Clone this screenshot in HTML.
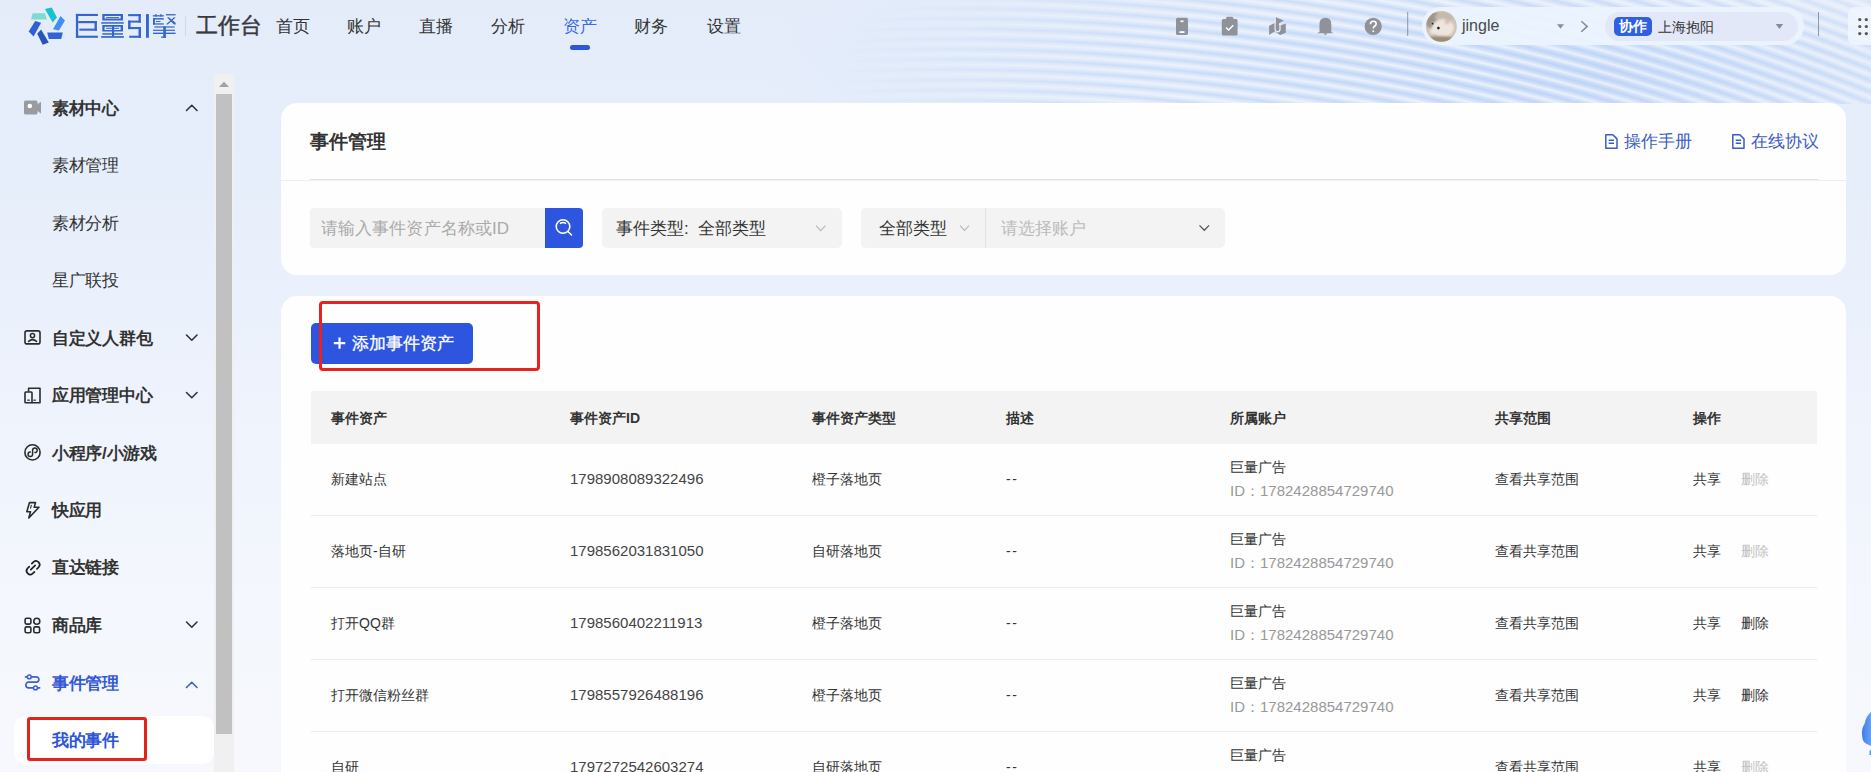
<!DOCTYPE html>
<html><head><meta charset="utf-8">
<style>
*{box-sizing:border-box;margin:0;padding:0}
html,body{width:1871px;height:772px;overflow:hidden}
body{font-family:"Liberation Sans",sans-serif;position:relative;color:#333;
background:linear-gradient(180deg,#e4ecfa 0px,#e6eefb 150px,#edf2fc 380px,#f4f7fd 600px,#f6f8fd 772px);}
.abs{position:absolute}
.nav{position:absolute;top:15px;font-size:17px;color:#333;line-height:24px;white-space:nowrap}
.si{position:absolute;left:52px;font-size:17px;line-height:22px;color:#333;white-space:nowrap;letter-spacing:-0.3px}
.sb{font-weight:bold}
.ic{position:absolute;left:18px;width:30px;height:30px}
.chev{position:absolute;left:182px;width:20px;height:14px}
.card{position:absolute;background:#fefefe;border-radius:16px}
.th{position:absolute;top:409px;font-size:14px;font-weight:bold;color:#333;line-height:18px;white-space:nowrap}
.td{position:absolute;font-size:14px;color:#333;line-height:18px;white-space:nowrap}
.num{font-size:15px;color:#444}
.gray{color:#999 !important}
.line{position:absolute;height:1px;background:#ebebeb}
</style></head><body>
<!-- header bg streaks -->
<div class="abs" style="left:0;top:0;width:1871px;height:104px;overflow:hidden">
  <div class="abs" style="left:0;top:0;width:1871px;height:104px;background:radial-gradient(ellipse 420px 90px at 1600px 75px,rgba(196,216,248,0.75),rgba(205,222,249,0) 100%),radial-gradient(ellipse 500px 120px at 1250px 60px,rgba(210,226,250,0.5),rgba(210,226,250,0) 100%)"></div>
  <div class="abs" style="left:0;top:0;width:1871px;height:104px;background:repeating-radial-gradient(ellipse 2000px 1700px at 950px 1750px,rgba(255,255,255,0) 0px,rgba(255,255,255,0.6) 3px,rgba(255,255,255,0) 6px,rgba(165,196,243,0.45) 9px,rgba(255,255,255,0) 12px);-webkit-mask-image:radial-gradient(ellipse 650px 170px at 1480px 70px,#000 0%,rgba(0,0,0,0.7) 55%,transparent 100%)"></div>
</div>

<!-- logo -->
<svg class="abs" style="left:0;top:0" width="80" height="50" viewBox="0 0 80 50">
<polygon points="32.6,13.3 45,13.3 46.9,19.4 31,19.4" fill="#7edbd2"/>
<polygon points="44.9,9.1 51.8,7.5 56.9,17.5 52.7,22.4" fill="#18c1cb"/>
<polygon points="60.5,15.9 65,20.4 58.9,30.5 53,29.2" fill="#3f8ff5"/>
<polygon points="47.2,32.4 62.8,32.4 61.2,38.9 48.8,38.9" fill="#2f63d6"/>
<polygon points="37.2,33.7 41.1,29.5 48.8,42.4 42.7,44.7" fill="#2b54b9"/>
<polygon points="28.7,31.4 35.2,21.1 41.1,22.7 33.6,36.6" fill="#3060d5"/>
</svg>
<svg class="abs" style="left:70px;top:8px" width="112" height="36" viewBox="70 8 112 36">
 <g fill="#3566cb">
  <!-- ju -->
  <rect x="75.9" y="13.9" width="2.3" height="23.9"/>
  <rect x="75.9" y="13.9" width="22" height="2.1"/>
  <rect x="75.9" y="35.7" width="22" height="2.1"/>
  <rect x="78.2" y="21" width="18.7" height="2.2"/>
  <rect x="94.5" y="21" width="2.4" height="9.7"/>
  <rect x="79.3" y="28.6" width="17.6" height="2.1"/>
  <!-- liang -->
  <path d="M102.3,13.9 H123 V20.6 H102.3 Z M104.6,16 V18.6 H120.6 V16 Z" fill-rule="evenodd"/>
  <rect x="106" y="17" width="13" height="0.9"/>
  <rect x="101.2" y="22.2" width="22.6" height="1.5"/>
  <path d="M102.3,25.1 H123 V31.5 H102.3 Z M104.6,26.7 V29.9 H120.6 V26.7 Z" fill-rule="evenodd"/>
  <rect x="106" y="27.8" width="13" height="1"/>
  <rect x="112" y="25.1" width="2.1" height="11.6"/>
  <rect x="102.3" y="33.2" width="20.7" height="1.5"/>
  <rect x="101.2" y="36.1" width="22.6" height="1.7"/>
  <!-- yin -->
  <rect x="128.1" y="14.1" width="12.7" height="2.1"/>
  <rect x="138.5" y="14.1" width="2.3" height="8.5"/>
  <rect x="128.1" y="20.6" width="12.7" height="2"/>
  <rect x="128.1" y="20.6" width="2.5" height="8.5"/>
  <rect x="128.1" y="27" width="12.7" height="2.1"/>
  <rect x="138.5" y="27" width="2.5" height="10.8"/>
  <rect x="129.2" y="35.7" width="11.8" height="2.1"/>
  <rect x="146" y="14.1" width="2.9" height="23.7"/>
  <!-- qing -->
  <rect x="152.8" y="15.2" width="11" height="1.3"/>
  <rect x="155.3" y="14.1" width="1.3" height="2.5"/>
  <rect x="160.3" y="14.1" width="1.3" height="2.5"/>
  <rect x="153" y="18.1" width="10.8" height="1.5"/>
  <rect x="153" y="18.1" width="1.9" height="6.4"/>
  <rect x="155.9" y="21" width="4.6" height="1"/>
  <rect x="153" y="23.3" width="10.8" height="1.3"/>
  <rect x="165.9" y="14.1" width="9.7" height="1.3"/>
  <path d="M167,17.6 L168.8,17.2 L175.6,22.7 L175.6,24.5 L174,24.5 Z"/>
  <path d="M174,17.2 L175.6,17.6 L167.8,24.5 L166,24.3 Z"/>
  <rect x="154.3" y="26.4" width="20.3" height="1.2"/>
  <rect x="153" y="29.7" width="22" height="1.2"/>
  <rect x="153" y="32.6" width="22.6" height="1.4"/>
  <rect x="163.2" y="26.4" width="2.7" height="11.4"/>
  <rect x="161.1" y="36.5" width="4.8" height="1.3"/>
 </g>
</svg>
<div class="abs" style="left:185px;top:16px;width:1px;height:20px;background:#d3d9e2"></div>
<div class="abs" style="left:196px;top:11px;font-size:22px;line-height:30px;color:#363940;-webkit-text-stroke:0.45px #363940">工作台</div>

<div class="nav" style="left:276px">首页</div>
<div class="nav" style="left:347px">账户</div>
<div class="nav" style="left:419px">直播</div>
<div class="nav" style="left:491px">分析</div>
<div class="nav" style="left:563px;color:#3a6ae0">资产</div>
<div class="abs" style="left:570px;top:45px;width:20px;height:5px;border-radius:3px;background:#2d55e0"></div>
<div class="nav" style="left:634px">财务</div>
<div class="nav" style="left:707px">设置</div>

<!-- header icons -->
<svg class="abs" style="left:1160px;top:5px" width="260" height="45" viewBox="1160 5 260 45">
 <g fill="#909299">
  <rect x="1176" y="17.8" width="12" height="17.2" rx="1.6"/>
  <rect x="1221.8" y="19" width="15.8" height="16.5" rx="1.6"/>
  <rect x="1226" y="16.8" width="7.4" height="3.4" rx="1.5"/>
  <path d="M1269.1,25.8 L1274.7,22.9 L1280.1,25.5 L1285.8,23.4 L1285.8,32.7 L1280.1,34.9 L1274.7,31.6 L1269.1,34.9 Z"/>
  <path d="M1275.1,19 L1275.1,29.3 A2.45,2.45 0 0 0 1280,29.3 L1280,22" stroke="#e6eefb" stroke-width="1.3" fill="none"/>
  <path d="M1275.9,17.2 L1283.8,20.6 L1278.9,23.6 L1278.9,29.3 A1.5,1.5 0 0 1 1275.9,29.3 Z"/>
  <path d="M1325.4,17.8 C1320.5,17.8 1319.5,21.5 1319.5,24.5 L1319.5,32 L1317,33.3 L1333.7,33.3 L1331.3,32 L1331.3,24.5 C1331.3,21.5 1330.3,17.8 1325.4,17.8 Z"/>
  <path d="M1323.3,33.3 L1327.5,33.3 L1325.4,35.2 Z"/>
  <circle cx="1373.2" cy="26.4" r="8.6"/>
 </g>
 <g fill="#fff">
  <rect x="1180.5" y="20.5" width="3" height="1.6"/>
  <rect x="1179.5" y="31.2" width="5" height="1.8"/>
 </g>
 <path d="M1226,27.5 L1228.6,30 L1233.3,25.3" stroke="#fff" stroke-width="1.5" fill="none"/>
 <path d="M1370.4,24.2 Q1370.4,21.2 1373.3,21.2 Q1376.2,21.2 1376.2,23.8 Q1376.2,25.5 1374.3,26.5 Q1373.3,27 1373.3,28.6" stroke="#fff" stroke-width="1.6" fill="none"/>
 <circle cx="1373.3" cy="31.2" r="1" fill="#fff"/>
 <rect x="1407.2" y="12" width="1" height="24" fill="rgba(110,116,128,0.7)"/>
</svg>

<!-- user pill -->
<div class="abs" style="left:1422px;top:7px;width:382px;height:38px;border-radius:19px;background:rgba(236,244,254,0.92)"></div>
<svg class="abs" style="left:1426px;top:10.8px" width="31" height="31" viewBox="0 0 31 31">
 <defs><clipPath id="av"><circle cx="15.4" cy="15.4" r="15.4"/></clipPath>
 <filter id="bl" x="-50%" y="-50%" width="200%" height="200%"><feGaussianBlur stdDeviation="0.9"/></filter></defs>
 <g clip-path="url(#av)">
  <rect width="31" height="31" fill="#cfc3b6"/>
  <g filter="url(#bl)">
  <ellipse cx="7" cy="9" rx="8" ry="9" fill="#9f968b"/>
  <ellipse cx="18" cy="6" rx="9" ry="5" fill="#c4b9ae"/>
  <ellipse cx="17" cy="17" rx="11" ry="9" fill="#eee5dc"/>
  <ellipse cx="15" cy="30" rx="16" ry="5" fill="#9d8c74"/>
  <ellipse cx="21" cy="11" rx="2.5" ry="2.2" fill="#dcbcb8"/>
  <ellipse cx="7" cy="20" rx="3" ry="3" fill="#efe8e2"/>
  </g>
  <circle cx="12.4" cy="17.1" r="1.3" fill="#151515"/>
  <circle cx="6.6" cy="12.7" r="0.9" fill="#222"/>
 </g>
</svg>
<div class="abs" style="left:1462px;top:16px;font-size:16px;line-height:20px;color:#4a4a4a">jingle</div>
<svg class="abs" style="left:1550px;top:15px" width="50" height="22" viewBox="1550 15 50 22">
 <path d="M1557,24.2 L1564,24.2 L1560.5,28.8 Z" fill="#8a8d93"/>
 <path d="M1581.3,21.2 L1587.2,26.4 L1581.3,31.7" stroke="#858890" stroke-width="1.5" fill="none"/>
</svg>
<div class="abs" style="left:1605px;top:12px;width:193px;height:29px;border-radius:14.5px;background:#e3e8f8"></div>
<div class="abs" style="left:1614px;top:17px;width:38px;height:18.5px;border-radius:5px;background:#2f60e2"></div>
<div class="abs" style="left:1619px;top:17px;font-size:14px;line-height:19px;color:#fff;font-weight:bold">协作</div>
<div class="abs" style="left:1658px;top:17.5px;font-size:14px;line-height:19px;color:#333">上海抱阳</div>
<svg class="abs" style="left:1770px;top:20px" width="60" height="20" viewBox="1770 20 60 20">
 <path d="M1775.7,23.9 L1783.2,23.9 L1779.45,29 Z" fill="#8a8d93"/>
</svg>
<div class="abs" style="left:1818px;top:12px;width:1px;height:23.5px;background:rgba(110,116,128,0.7)"></div>
<div class="abs" style="left:1848px;top:7px;width:40px;height:38px;border-radius:7px;background:rgba(240,245,253,0.9)"></div>
<svg class="abs" style="left:1850px;top:14px" width="21" height="25" viewBox="1850 14 21 25">
 <g fill="#555">
 <circle cx="1859.8" cy="19.6" r="1.6"/><circle cx="1866.3" cy="19.6" r="1.6"/>
 <circle cx="1859.8" cy="26.5" r="1.6"/><circle cx="1866.3" cy="26.5" r="1.6"/>
 <circle cx="1859.8" cy="33.6" r="1.6"/><circle cx="1866.3" cy="33.6" r="1.6"/>
 </g>
</svg>
<!-- sidebar -->
<svg class="abs" style="left:0;top:90px" width="215" height="620" viewBox="0 90 215 620" fill="none" stroke-linecap="round" stroke-linejoin="round">
 <!-- camera -->
 <rect x="24" y="100.6" width="13.5" height="14" rx="1.6" fill="#9a9ba0"/>
 <path d="M37,104.5 L41,101.8 L41,113.4 L37,110.8 Z" fill="#9a9ba0"/>
 <circle cx="29.8" cy="106" r="2.3" fill="#fff"/>
 <!-- chevron up -->
 <path d="M186.5,110.5 L191.8,105.3 L197,110.5" stroke="#333" stroke-width="1.6"/>
 <!-- person box -->
 <rect x="25" y="330.9" width="15" height="13" rx="2" stroke="#2b2b2b" stroke-width="1.6"/>
 <circle cx="32.5" cy="335.6" r="2.1" stroke="#2b2b2b" stroke-width="1.5"/>
 <path d="M28.6,341.4 Q32.5,337.8 36.6,341.4" stroke="#2b2b2b" stroke-width="1.5"/>
 <path d="M186.5,335 L191.8,340.2 L197,335" stroke="#333" stroke-width="1.6"/>
 <!-- devices -->
 <path d="M28.6,391 L28.6,388.2 L40,388.2 L40,402.8 L32,402.8" stroke="#2b2b2b" stroke-width="1.6"/>
 <rect x="25" y="392" width="7" height="10.8" rx="0.8" stroke="#2b2b2b" stroke-width="1.6"/>
 <path d="M27.8,400.2 L29.3,400.2 M34,400.2 L35.3,400.2" stroke="#2b2b2b" stroke-width="1.3"/>
 <path d="M186.5,392.5 L191.8,397.7 L197,392.5" stroke="#333" stroke-width="1.6"/>
 <!-- mini program -->
 <circle cx="32.5" cy="452.4" r="7.6" stroke="#2b2b2b" stroke-width="1.6"/>
 <path d="M30.3,452 A2.3,2.3 0 1 0 32.6,454.3 L32.6,450.3 A2.3,2.3 0 1 1 34.9,452.6" stroke="#2b2b2b" stroke-width="1.5"/>
 <!-- lightning -->
 <path d="M29.5,502.6 L35.5,502.6 L34.2,507.2 L39,507.2 L28.8,518 L30.5,511.7 L26.8,511.7 Z" stroke="#2b2b2b" stroke-width="1.6"/>
 <path d="M31.3,505.4 L30.6,508.2" stroke="#2b2b2b" stroke-width="1.1"/>
 <!-- link -->
 <path d="M31.8,563.6 L33.6,561.8 A3.7,3.7 0 0 1 38.8,567 L37,568.8" stroke="#1f1f1f" stroke-width="1.7"/>
 <path d="M29.3,566.6 L27.4,568.5 A3.7,3.7 0 0 0 32.6,573.7 L34.4,571.9" stroke="#1f1f1f" stroke-width="1.7"/>
 <path d="M30.8,569.7 L35.2,565.4" stroke="#1f1f1f" stroke-width="1.7"/>
 <!-- grid -->
 <rect x="25.1" y="618.3" width="5.8" height="5.8" rx="1.5" stroke="#2b2b2b" stroke-width="1.6"/>
 <circle cx="36.8" cy="621.2" r="3" stroke="#2b2b2b" stroke-width="1.6"/>
 <rect x="25.1" y="626.9" width="5.8" height="5.8" rx="1.5" stroke="#2b2b2b" stroke-width="1.6"/>
 <rect x="33.8" y="626.9" width="5.8" height="5.8" rx="1.5" stroke="#2b2b2b" stroke-width="1.6"/>
 <path d="M186.5,622 L191.8,627.2 L197,622" stroke="#333" stroke-width="1.6"/>
 <!-- event -->
 <path d="M25.5,676.9 L36.3,676.9 A2.6,2.6 0 0 1 36.3,682.1 L28.7,682.1 A2.9,2.9 0 0 0 28.7,687.9 L39.7,687.9" stroke="#3a5fd0" stroke-width="1.6"/>
 <circle cx="29.3" cy="676.9" r="1.9" fill="#fff" stroke="#3a5fd0" stroke-width="1.5"/>
 <circle cx="35.5" cy="687.9" r="1.9" fill="#fff" stroke="#3a5fd0" stroke-width="1.5"/>
 <path d="M186.5,687.5 L191.8,682.3 L197,687.5" stroke="#3a5fd0" stroke-width="1.6"/>
</svg>
<div class="si sb" style="top:98px">素材中心</div>
<div class="si" style="top:155px">素材管理</div>
<div class="si" style="top:213px">素材分析</div>
<div class="si" style="top:270px">星广联投</div>
<div class="si sb" style="top:328px">自定义人群包</div>
<div class="si sb" style="top:385px">应用管理中心</div>
<div class="si sb" style="top:443px">小程序/小游戏</div>
<div class="si sb" style="top:500px">快应用</div>
<div class="si sb" style="top:557px">直达链接</div>
<div class="si sb" style="top:615px">商品库</div>
<div class="si sb" style="top:673px;color:#3459d6">事件管理</div>
<div class="abs" style="left:14px;top:716px;width:200px;height:48px;border-radius:12px;background:#fff"></div>
<div class="si sb" style="top:730px;color:#2d55d8">我的事件</div>
<div class="abs" style="left:26.5px;top:716.5px;width:120px;height:44.5px;border:3px solid #e5231d;border-radius:3px"></div>

<!-- scrollbar -->
<div class="abs" style="left:214px;top:74px;width:20px;height:698px;background:#f0f0f0"></div>
<svg class="abs" style="left:214px;top:74px" width="20" height="20" viewBox="214 74 20 20"><path d="M219,87 L229,87 L224,81.8 Z" fill="#a3a3a3"/></svg>
<div class="abs" style="left:216px;top:94px;width:16px;height:640px;background:#c1c1c1"></div>
<!-- card 1 -->
<div class="card" style="left:281px;top:103px;width:1565px;height:172px"></div>
<div class="abs" style="left:310px;top:129px;font-size:19px;font-weight:bold;line-height:25px;color:#333">事件管理</div>
<svg class="abs" style="left:1600px;top:130px" width="150" height="22" viewBox="1600 130 150 22" fill="none" stroke="#3b5cc4" stroke-width="1.5" stroke-linejoin="round">
 <path d="M1605.8,134.7 L1612.8,134.7 L1617,138.9 L1617,148.2 L1605.8,148.2 Z"/>
 <path d="M1608.7,140.3 L1614,140.3 M1608.7,143.2 L1614,143.2"/>
 <path d="M1732.8,134.7 L1739.8,134.7 L1744,138.9 L1744,148.2 L1732.8,148.2 Z"/>
 <path d="M1735.7,140.3 L1741,140.3 M1735.7,143.2 L1741,143.2"/>
</svg>
<div class="abs" style="left:1624px;top:130px;font-size:17px;line-height:23px;color:#3b5cc4">操作手册</div>
<div class="abs" style="left:1751px;top:130px;font-size:17px;line-height:23px;color:#3b5cc4">在线协议</div>
<div class="abs" style="left:281px;top:180px;width:29px;height:1px;background:#f0f0f0"></div>
<div class="abs" style="left:310px;top:179px;width:1508px;height:1px;background:#e2e2e2"></div><div class="abs" style="left:310px;top:180px;width:1508px;height:1px;background:#f2f2f2"></div>
<div class="abs" style="left:1818px;top:180px;width:29px;height:1px;background:#eeeeee"></div>

<div class="abs" style="left:310px;top:208px;width:235px;height:40px;background:#f3f3f3;border-radius:4px 0 0 4px"></div>
<div class="abs" style="left:321px;top:217px;font-size:17px;line-height:23px;color:#aaa;letter-spacing:0.1px">请输入事件资产名称或ID</div>
<div class="abs" style="left:545px;top:208px;width:38px;height:40px;background:#2d55e0;border-radius:0 4px 4px 0"></div>
<svg class="abs" style="left:545px;top:208px" width="38" height="40" viewBox="545 208 38 40" fill="none" stroke="#fff" stroke-width="1.6" stroke-linecap="round">
 <circle cx="563" cy="226.5" r="6.8"/>
 <path d="M568,231.5 L571.5,235"/>
 <path d="M560.5,223.3 Q563,221.8 565.5,223.3"/>
</svg>

<div class="abs" style="left:602px;top:208px;width:240px;height:40px;background:#f3f3f3;border-radius:5px"></div>
<div class="abs" style="left:616px;top:217px;font-size:17px;line-height:23px;color:#333">事件类型:&nbsp; 全部类型</div>
<svg class="abs" style="left:810px;top:218px" width="24" height="20" viewBox="810 218 24 20"><path d="M816,225.7 L820.7,230.6 L825.4,225.7" stroke="#b8b8b8" stroke-width="1.2" fill="none"/></svg>

<div class="abs" style="left:861px;top:208px;width:364px;height:40px;background:#f3f3f3;border-radius:5px"></div>
<div class="abs" style="left:879px;top:217px;font-size:17px;line-height:23px;color:#333">全部类型</div>
<svg class="abs" style="left:950px;top:218px" width="270" height="20" viewBox="950 218 270 20">
 <path d="M960,225.7 L964.5,230.4 L969,225.7" stroke="#b8b8b8" stroke-width="1.2" fill="none"/>
 <path d="M1199.5,225.4 L1204.3,230.3 L1209.1,225.4" stroke="#555" stroke-width="1.3" fill="none"/>
</svg>
<div class="abs" style="left:985px;top:208px;width:1px;height:40px;background:#e2e2e2"></div>
<div class="abs" style="left:1001px;top:217px;font-size:17px;line-height:23px;color:#bbb">请选择账户</div>

<!-- card 2 -->
<div class="card" style="left:281px;top:296px;width:1565px;height:520px"></div>
<div class="abs" style="left:311px;top:323px;width:162px;height:41px;background:#2e55e0;border-radius:5px"></div>
<svg class="abs" style="left:330px;top:334px" width="20" height="18" viewBox="330 334 20 18"><path d="M333.8,343.1 L345.3,343.1 M339.55,337.4 L339.55,348.8" stroke="#fff" stroke-width="2.2"/></svg>
<div class="abs" style="left:352px;top:332px;font-size:17px;line-height:23px;color:#fff;-webkit-text-stroke:0.3px #fff">添加事件资产</div>
<div class="abs" style="left:319px;top:301px;width:221px;height:70px;border:3.5px solid #e8231e;border-radius:4px"></div>

<div class="abs" style="left:311px;top:391px;width:1506px;height:53px;background:#f3f3f3"></div>
<div class="th" style="left:331px">事件资产</div>
<div class="th" style="left:570px">事件资产ID</div>
<div class="th" style="left:812px">事件资产类型</div>
<div class="th" style="left:1006px">描述</div>
<div class="th" style="left:1230px">所属账户</div>
<div class="th" style="left:1495px">共享范围</div>
<div class="th" style="left:1693px">操作</div>

<!-- right floating blob -->
<svg class="abs" style="left:1855px;top:705px" width="16" height="55" viewBox="1855 705 16 55">
 <defs><linearGradient id="blg" x1="0" y1="0" x2="1" y2="0"><stop offset="0" stop-color="#3f7ef0"/><stop offset="1" stop-color="#6aa0ea"/></linearGradient></defs>
 <path d="M1871,712 Q1866,716 1864.5,724 Q1861.5,728 1862,735 Q1862.5,743 1867,744 L1871,746 Z" fill="url(#blg)"/>
 <path d="M1871,750 L1869.5,751 L1869.5,755 L1871,755 Z" fill="#5d96ea"/>
</svg>
<!--ROWS-->
<div class="td" style="left:331px;top:470px">新建站点</div>
<div class="td num" style="left:570px;top:470px">1798908089322496</div>
<div class="td" style="left:812px;top:470px">橙子落地页</div>
<div class="td" style="left:1006px;top:470px;letter-spacing:1.5px">--</div>
<div class="td" style="left:1230px;top:458px">巨量广告</div>
<div class="td num gray" style="left:1230px;top:482px">ID：1782428854729740</div>
<div class="td" style="left:1495px;top:470px">查看共享范围</div>
<div class="td" style="left:1693px;top:470px">共享</div>
<div class="td" style="left:1741px;top:470px;color:#c0c0c0">删除</div>
<div class="line" style="left:311px;top:515px;width:1506px"></div>
<div class="td" style="left:331px;top:542px">落地页-自研</div>
<div class="td num" style="left:570px;top:542px">1798562031831050</div>
<div class="td" style="left:812px;top:542px">自研落地页</div>
<div class="td" style="left:1006px;top:542px;letter-spacing:1.5px">--</div>
<div class="td" style="left:1230px;top:530px">巨量广告</div>
<div class="td num gray" style="left:1230px;top:554px">ID：1782428854729740</div>
<div class="td" style="left:1495px;top:542px">查看共享范围</div>
<div class="td" style="left:1693px;top:542px">共享</div>
<div class="td" style="left:1741px;top:542px;color:#c0c0c0">删除</div>
<div class="line" style="left:311px;top:587px;width:1506px"></div>
<div class="td" style="left:331px;top:614px">打开QQ群</div>
<div class="td num" style="left:570px;top:614px">1798560402211913</div>
<div class="td" style="left:812px;top:614px">橙子落地页</div>
<div class="td" style="left:1006px;top:614px;letter-spacing:1.5px">--</div>
<div class="td" style="left:1230px;top:602px">巨量广告</div>
<div class="td num gray" style="left:1230px;top:626px">ID：1782428854729740</div>
<div class="td" style="left:1495px;top:614px">查看共享范围</div>
<div class="td" style="left:1693px;top:614px">共享</div>
<div class="td" style="left:1741px;top:614px;color:#333">删除</div>
<div class="line" style="left:311px;top:659px;width:1506px"></div>
<div class="td" style="left:331px;top:686px">打开微信粉丝群</div>
<div class="td num" style="left:570px;top:686px">1798557926488196</div>
<div class="td" style="left:812px;top:686px">橙子落地页</div>
<div class="td" style="left:1006px;top:686px;letter-spacing:1.5px">--</div>
<div class="td" style="left:1230px;top:674px">巨量广告</div>
<div class="td num gray" style="left:1230px;top:698px">ID：1782428854729740</div>
<div class="td" style="left:1495px;top:686px">查看共享范围</div>
<div class="td" style="left:1693px;top:686px">共享</div>
<div class="td" style="left:1741px;top:686px;color:#333">删除</div>
<div class="line" style="left:311px;top:731px;width:1506px"></div>
<div class="td" style="left:331px;top:758px">自研</div>
<div class="td num" style="left:570px;top:758px">1797272542603274</div>
<div class="td" style="left:812px;top:758px">自研落地页</div>
<div class="td" style="left:1006px;top:758px;letter-spacing:1.5px">--</div>
<div class="td" style="left:1230px;top:746px">巨量广告</div>
<div class="td num gray" style="left:1230px;top:770px">ID：1782428854729740</div>
<div class="td" style="left:1495px;top:758px">查看共享范围</div>
<div class="td" style="left:1693px;top:758px">共享</div>
<div class="td" style="left:1741px;top:758px;color:#c0c0c0">删除</div>
<div class="line" style="left:311px;top:803px;width:1506px"></div>
<!--/ROWS-->
</body></html>
